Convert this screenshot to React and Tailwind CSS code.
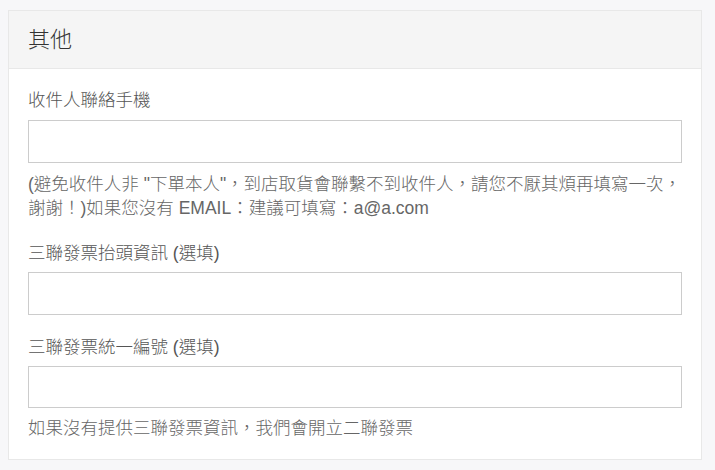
export default function App() {
  const font = { fontFamily: '"Liberation Sans", "Noto Sans CJK TC", sans-serif' };
  return (
    <div className="w-[715px] h-[470px] bg-[#f7f7f9] pt-[10px] pl-[8px]" style={font}>
      <div className="w-[694px] h-[450px] bg-white border border-[#e8e8e8] flex flex-col">
        <div className="h-[58px] bg-[#f5f5f5] border-b border-[#e8e8e8] flex items-center px-[19px] shrink-0">
          <h2 className="text-[22px] text-[#333] leading-none font-light">其他</h2>
        </div>
        <div className="px-[19px] pt-[19px] flex flex-col text-[17.5px] leading-[24px] font-light">
          <label className="text-[#555] mb-[8px]">收件人聯絡手機</label>
          <input className="h-[43px] border border-[#ccc] bg-white outline-none" />
          <p className="text-[#666] mt-[9px]">
            (避免收件人非 "下單本人"，到店取貨會聯繫不到收件人，請您不厭其煩再填寫一次，謝謝！)如果您沒有 EMAIL：建議可填寫：a@a.com
          </p>
          <label className="text-[#555] mt-[21px] mb-[7px]">三聯發票抬頭資訊 (選填)</label>
          <input className="h-[43px] border border-[#ccc] bg-white outline-none" />
          <label className="text-[#555] mt-[20px] mb-[7px]">三聯發票統一編號 (選填)</label>
          <input className="h-[42px] border border-[#ccc] bg-white outline-none" />
          <p className="text-[#666] mt-[8px]">如果沒有提供三聯發票資訊，我們會開立二聯發票</p>
        </div>
      </div>
    </div>
  );
}
